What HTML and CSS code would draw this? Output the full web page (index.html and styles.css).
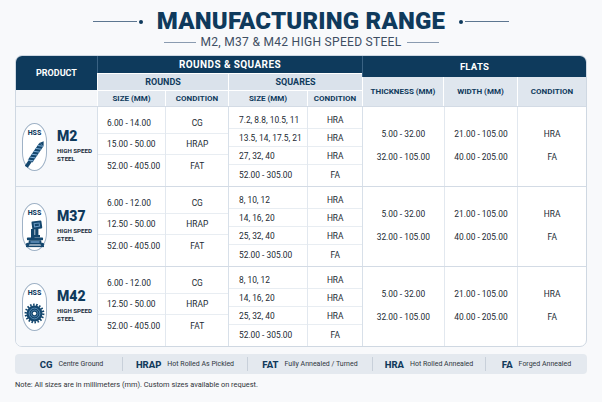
FILE: index.html
```html
<!DOCTYPE html>
<html lang="en">
<head>
<meta charset="utf-8">
<title>Manufacturing Range</title>
<link rel="stylesheet" href="styles.css">
</head>
<body>
<div class="page">
  <header class="heading">
    <div class="title-row">
      <span class="rule"><span class="line"></span><span class="dot"></span></span>
      <h1 class="title">MANUFACTURING RANGE</h1>
      <span class="rule rule-r"><span class="dot"></span><span class="line"></span></span>
    </div>
    <div class="sub-row">
      <span class="sub-line"></span>
      <h2 class="subtitle">M2, M37 &amp; M42 HIGH SPEED STEEL</h2>
      <span class="sub-line"></span>
    </div>
  </header>

  <section class="table">
    <div class="thead">
      <div class="th-product">
        <div class="dark prod-h">PRODUCT</div>
        <div class="blank"></div>
      </div>
      <div class="th-rs">
        <div class="dark rs-h">ROUNDS &amp; SQUARES</div>
        <div class="mid">
          <div class="mid-cell w-rounds">ROUNDS</div>
          <div class="mid-cell w-squares">SQUARES</div>
        </div>
        <div class="low">
          <div class="low-cell w-rsize">SIZE (MM)</div>
          <div class="low-cell w-rcond">CONDITION</div>
          <div class="low-cell w-ssize">SIZE (MM)</div>
          <div class="low-cell w-scond">CONDITION</div>
        </div>
      </div>
      <div class="th-flats">
        <div class="dark flats-h">FLATS</div>
        <div class="flat-sub">
          <div class="fs-cell w-thick">THICKNESS (MM)</div>
          <div class="fs-cell w-width">WIDTH (MM)</div>
          <div class="fs-cell w-fcond">CONDITION</div>
        </div>
      </div>
    </div>

    <!-- M2 -->
    <div class="group">
      <div class="prod">
        <div class="badge">
          <span class="hss">HSS</span>
          <svg class="ico ico-drill" viewBox="0 0 20 30" width="20" height="30">
            <g transform="rotate(34 10 15)">
              <path d="M7.4 3.5 L10 -0.5 L12.6 3.5 Z" fill="#14476e"/>
              <rect x="7.4" y="3.5" width="5.2" height="20" fill="#14476e"/>
              <rect x="8.2" y="23.5" width="3.6" height="7" fill="#14476e"/>
              <path d="M7.4 6.5 L12.6 4 M7.4 10 L12.6 7.5 M7.4 13.5 L12.6 11 M7.4 17 L12.6 14.5 M7.4 20.5 L12.6 18 M7.4 24 L12.6 21.5" stroke="#7eaed6" stroke-width="0.9"/>
            </g>
          </svg>
        </div>
        <div class="name">
          <div class="grade">M2</div>
          <div class="desc">HIGH SPEED<br>STEEL</div>
        </div>
      </div>
      <div class="block w-rounds">
        <div class="col w-rsize r-col">
          <div class="rc">6.00 - 14.00</div>
          <div class="rc">15.00 - 50.00</div>
          <div class="rc">52.00 - 405.00</div>
        </div>
        <div class="col w-rcond r-col center">
          <div class="rc">CG</div>
          <div class="rc">HRAP</div>
          <div class="rc">FAT</div>
        </div>
      </div>
      <div class="block w-squares">
        <div class="col w-ssize s-col">
          <div class="sc">7.2, 8.8, 10.5, 11</div>
          <div class="sc">13.5, 14, 17.5, 21</div>
          <div class="sc">27, 32, 40</div>
          <div class="sc">52.00 - 305.00</div>
        </div>
        <div class="col w-scond s-col center">
          <div class="sc">HRA</div>
          <div class="sc">HRA</div>
          <div class="sc">HRA</div>
          <div class="sc">FA</div>
        </div>
      </div>
      <div class="block w-flats">
        <div class="col w-thick f-col"><div class="fc">5.00 - 32.00</div><div class="fc">32.00 - 105.00</div></div>
        <div class="col w-width f-col"><div class="fc">21.00 - 105.00</div><div class="fc">40.00 - 205.00</div></div>
        <div class="col w-fcond f-col"><div class="fc">HRA</div><div class="fc">FA</div></div>
      </div>
    </div>

    <!-- M37 -->
    <div class="group">
      <div class="prod">
        <div class="badge">
          <span class="hss">HSS</span>
          <svg class="ico ico-mill" viewBox="0 0 20 28" width="20" height="28">
            <g transform="rotate(-8 12 6)">
              <rect x="7" y="1" width="10" height="8" rx="1" fill="#14476e"/>
              <rect x="9" y="2.8" width="6" height="4.2" fill="#6d9cc6"/>
              <rect x="10" y="3.8" width="4" height="2.2" fill="#14476e"/>
            </g>
            <rect x="10.2" y="8.5" width="3.2" height="7" fill="#14476e"/>
            <rect x="6" y="9" width="3.5" height="10" fill="#14476e"/>
            <rect x="8" y="15" width="7" height="2.4" fill="#14476e"/>
            <rect x="2" y="17.6" width="16" height="2.6" rx="0.6" fill="#14476e"/>
            <path d="M4 20.2 H16 L17 24.5 H3 Z" fill="#14476e"/>
            <rect x="5.5" y="21.3" width="9" height="1.4" fill="#6d9cc6"/>
            <circle cx="2.6" cy="24.6" r="1.8" fill="#14476e"/>
            <circle cx="17.4" cy="24.6" r="1.8" fill="#14476e"/>
            <rect x="1" y="25.5" width="18" height="1.6" fill="#14476e"/>
          </svg>
        </div>
        <div class="name">
          <div class="grade">M37</div>
          <div class="desc">HIGH SPEED<br>STEEL</div>
        </div>
      </div>
      <div class="block w-rounds">
        <div class="col w-rsize r-col">
          <div class="rc">6.00 - 12.00</div>
          <div class="rc">12.50 - 50.00</div>
          <div class="rc">52.00 - 405.00</div>
        </div>
        <div class="col w-rcond r-col center">
          <div class="rc">CG</div>
          <div class="rc">HRAP</div>
          <div class="rc">FAT</div>
        </div>
      </div>
      <div class="block w-squares">
        <div class="col w-ssize s-col">
          <div class="sc">8, 10, 12</div>
          <div class="sc">14, 16, 20</div>
          <div class="sc">25, 32, 40</div>
          <div class="sc">52.00 - 305.00</div>
        </div>
        <div class="col w-scond s-col center">
          <div class="sc">HRA</div>
          <div class="sc">HRA</div>
          <div class="sc">HRA</div>
          <div class="sc">FA</div>
        </div>
      </div>
      <div class="block w-flats">
        <div class="col w-thick f-col"><div class="fc">5.00 - 32.00</div><div class="fc">32.00 - 105.00</div></div>
        <div class="col w-width f-col"><div class="fc">21.00 - 105.00</div><div class="fc">40.00 - 205.00</div></div>
        <div class="col w-fcond f-col"><div class="fc">HRA</div><div class="fc">FA</div></div>
      </div>
    </div>

    <!-- M42 -->
    <div class="group">
      <div class="prod">
        <div class="badge">
          <span class="hss">HSS</span>
          <svg class="ico ico-saw" viewBox="0 0 22 22" width="21" height="21">
            <circle cx="11" cy="11" r="9.2" fill="none" stroke="#14476e" stroke-width="2.4" stroke-dasharray="1.6 1.6"/>
            <circle cx="11" cy="11" r="8.4" fill="#14476e"/>
            <circle cx="11" cy="11" r="5.6" fill="none" stroke="#6d9cc6" stroke-width="0.8"/>
            <circle cx="11" cy="11" r="3.6" fill="none" stroke="#6d9cc6" stroke-width="0.6"/>
            <circle cx="11" cy="11" r="1.8" fill="#ffffff"/>
          </svg>
        </div>
        <div class="name">
          <div class="grade">M42</div>
          <div class="desc">HIGH SPEED<br>STEEL</div>
        </div>
      </div>
      <div class="block w-rounds">
        <div class="col w-rsize r-col">
          <div class="rc">6.00 - 12.00</div>
          <div class="rc">12.50 - 50.00</div>
          <div class="rc">52.00 - 405.00</div>
        </div>
        <div class="col w-rcond r-col center">
          <div class="rc">CG</div>
          <div class="rc">HRAP</div>
          <div class="rc">FAT</div>
        </div>
      </div>
      <div class="block w-squares">
        <div class="col w-ssize s-col">
          <div class="sc">8, 10, 12</div>
          <div class="sc">14, 16, 20</div>
          <div class="sc">25, 32, 40</div>
          <div class="sc">52.00 - 305.00</div>
        </div>
        <div class="col w-scond s-col center">
          <div class="sc">HRA</div>
          <div class="sc">HRA</div>
          <div class="sc">HRA</div>
          <div class="sc">FA</div>
        </div>
      </div>
      <div class="block w-flats">
        <div class="col w-thick f-col"><div class="fc">5.00 - 32.00</div><div class="fc">32.00 - 105.00</div></div>
        <div class="col w-width f-col"><div class="fc">21.00 - 105.00</div><div class="fc">40.00 - 205.00</div></div>
        <div class="col w-fcond f-col"><div class="fc">HRA</div><div class="fc">FA</div></div>
      </div>
    </div>
  </section>

  <div class="legend">
    <div class="lg"><b>CG</b><span>Centre Ground</span></div>
    <div class="lg"><b>HRAP</b><span>Hot Rolled As Pickled</span></div>
    <div class="lg"><b>FAT</b><span>Fully Annealed / Turned</span></div>
    <div class="lg"><b>HRA</b><span>Hot Rolled Annealed</span></div>
    <div class="lg"><b>FA</b><span>Forged Annealed</span></div>
  </div>

  <p class="note">Note: All sizes are in millimeters (mm). Custom sizes available on request.</p>
</div>
</body>
</html>
```

FILE: styles.css
```css
* { box-sizing: border-box; margin: 0; padding: 0; }

html, body {
  width: 602px;
  height: 402px;
  overflow: hidden;
}

body {
  background: #f8f9fb;
  font-family: Roboto, "Liberation Sans", Arial, sans-serif;
  color: #1f2933;
}

.page {
  padding: 10px 15px 0;
}

/* ---------- heading ---------- */
.title-row {
  display: flex;
  align-items: center;
  justify-content: center;
  height: 23px;
  gap: 14px;
}

.title {
  font-size: 24px;
  line-height: 23px;
  font-weight: 900;
  color: #0f3a5c;
  letter-spacing: 0.2px;
  white-space: nowrap;
}

.rule {
  display: flex;
  align-items: center;
  gap: 2px;
}

.rule .line {
  width: 44px;
  height: 1px;
  background: #5d7690;
}

.rule .dot {
  width: 4px;
  height: 4px;
  border-radius: 50%;
  background: #0f3a5c;
}

.sub-row {
  margin-top: 4px;
  display: flex;
  align-items: center;
  justify-content: center;
  gap: 5px;
  height: 11px;
}

.sub-line {
  width: 32px;
  height: 1px;
  background: #8a9bb0;
}

.subtitle {
  font-size: 12px;
  line-height: 11px;
  font-weight: 400;
  letter-spacing: 0.3px;
  color: #3e4e62;
  white-space: nowrap;
}

/* ---------- table ---------- */
.table {
  margin-top: 7px;
  width: 572px;
  border: 1px solid #cfd8e2;
  border-radius: 7px;
  overflow: hidden;
  background: #ffffff;
}

.thead {
  display: flex;
  height: 50px;
}

.dark {
  background: #0e3a5c;
  color: #ffffff;
  font-weight: 700;
  display: flex;
  align-items: center;
  justify-content: center;
}

.th-product { width: 81px; display: flex; flex-direction: column; }
.prod-h { height: 34px; font-size: 9px; }
.blank { height: 16px; background: #f4f6f9; }

.th-rs { width: 265px; display: flex; flex-direction: column; }
.rs-h {
  height: 17px;
  font-size: 10px;
  letter-spacing: 0.4px;
  border-left: 1px solid #3a6283;
}

.mid { display: flex; height: 17px; background: #dae2eb; }
.mid-cell {
  display: flex;
  align-items: center;
  justify-content: center;
  font-size: 9px;
  font-weight: 700;
  color: #0f3a5c;
  border-left: 1px solid #ffffff;
  border-top: 1px solid #ffffff;
}

.low { display: flex; height: 16px; background: #e3e9f0; }
.low-cell {
  display: flex;
  align-items: center;
  justify-content: center;
  font-size: 8px;
  font-weight: 700;
  color: #0f3a5c;
  border-left: 1px solid #ffffff;
  border-top: 1px solid #ffffff;
}

.th-flats { width: 224px; display: flex; flex-direction: column; }
.flats-h {
  height: 21px;
  font-size: 9.6px;
  letter-spacing: 0.2px;
  border-left: 1px solid #3a6283;
}
.flat-sub { display: flex; height: 29px; background: #dfe6ee; }
.fs-cell {
  display: flex;
  align-items: center;
  justify-content: center;
  font-size: 8px;
  font-weight: 700;
  color: #0f3a5c;
  border-left: 1px solid #ffffff;
}

/* widths */
.w-rounds { width: 131px; }
.w-squares { width: 134px; }
.w-flats { width: 224px; }
.w-rsize { width: 68px; }
.w-rcond { width: 63px; }
.w-ssize { width: 79px; }
.w-scond { width: 55px; }
.w-thick { width: 81px; }
.w-width { width: 74px; }
.w-fcond { width: 69px; }

/* ---------- body groups ---------- */
.group {
  display: flex;
  height: 80px;
  border-top: 1px solid #d3dbe5;
}

.prod {
  width: 81px;
  background: #f6f8fb;
  display: flex;
  align-items: center;
  padding-left: 6px;
  gap: 10px;
}

.badge {
  width: 25px;
  height: 48px;
  border: 1px solid #9fb2c6;
  border-radius: 50% / 38%;
  background: #ffffff;
  display: flex;
  flex-direction: column;
  align-items: center;
  padding-top: 5px;
  flex-shrink: 0;
}

.hss {
  font-size: 7px;
  line-height: 8px;
  font-weight: 800;
  color: #0f3a5c;
}

.ico { display: block; }
.ico-drill { margin-top: 2px; }
.ico-mill { margin-top: 3px; }
.ico-saw { margin-top: 6px; }

.name { display: flex; flex-direction: column; }

.grade {
  font-size: 14px;
  line-height: 15px;
  font-weight: 900;
  color: #0f3a5c;
}

.desc {
  margin-top: 4px;
  font-size: 6.2px;
  line-height: 7.6px;
  font-weight: 700;
  color: #1c2b3a;
  white-space: nowrap;
}

.block {
  display: flex;
  border-left: 1px solid #d8e0e9;
}

.col {
  display: flex;
  flex-direction: column;
  border-left: 1px solid #e2e8ef;
  font-size: 8.4px;
  color: #222a33;
}
.col:first-child { border-left: 0; }

.r-col { padding-top: 6px; }
.rc {
  height: 21px;
  display: flex;
  align-items: center;
  border-bottom: 1px solid #e8edf2;
  padding-left: 9px;
  color: #222a33;
}
.rc:last-child { border-bottom: 0; }

.s-col { padding-top: 4px; }
.sc {
  height: 18px;
  display: flex;
  align-items: center;
  border-bottom: 1px solid #e8edf2;
  padding-left: 10px;
  white-space: nowrap;
  color: #222a33;
}
.sc:last-child { border-bottom: 0; height: 20px; }

.center .rc,
.center .sc { justify-content: center; padding-left: 0; }

.f-col { justify-content: center; padding-bottom: 2px; }
.fc {
  height: 23px;
  display: flex;
  align-items: center;
  justify-content: center;
  color: #222a33;
}

/* ---------- legend ---------- */
.legend {
  margin-top: 7px;
  width: 572px;
  height: 20px;
  background: #e4e9ef;
  border-radius: 4px;
  display: grid;
  grid-template-columns: 107fr 125fr 125fr 113fr 102fr;
  align-items: center;
}

.lg {
  display: flex;
  align-items: center;
  justify-content: center;
  gap: 6px;
  height: 14px;
  border-left: 1px solid #c8d0da;
}
.lg:first-child { border-left: 0; padding-left: 6px; }

.lg b {
  font-size: 9.5px;
  font-weight: 800;
  color: #113a5c;
}

.lg span {
  font-size: 7px;
  color: #2f3740;
}

.note {
  margin-top: 6px;
  font-size: 7.4px;
  line-height: 9px;
  color: #2f3338;
}
```
